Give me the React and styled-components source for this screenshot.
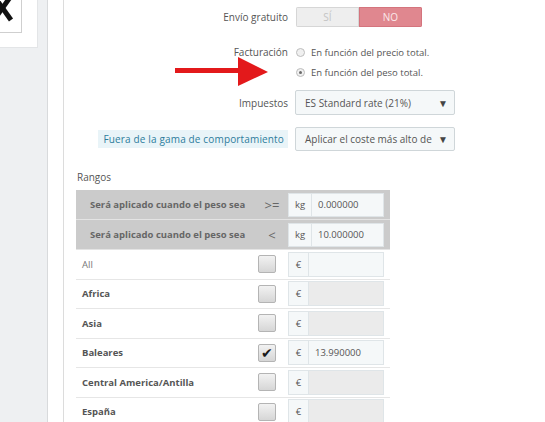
import React from 'react';
import styled, { createGlobalStyle } from 'styled-components';

const GlobalStyle = createGlobalStyle`
  html, body {
    margin: 0;
    padding: 0;
    background: #fff;
    font-family: "Open Sans", "Liberation Sans", sans-serif;
    color: #555;
  }
`;

const Page = styled.div`
  position: relative;
  display: flex;
  width: 545px;
  height: 422px;
  overflow: hidden;
`;

const Sidebar = styled.div`
  width: 47px;
  flex-shrink: 0;
  background: #eef0f2;
  border-right: 1px solid #d8dadc;
`;

const LogoCard = styled.div`
  width: 38px;
  height: 48px;
  background: #fff;
  border-right: 1px solid #e3e5e7;
  border-bottom: 1px solid #e3e5e7;
  box-sizing: border-box;
`;

const LogoBox = styled.div`
  width: 22px;
  height: 33px;
  border-right: 1px solid #cfcfcf;
  border-bottom: 1px solid #cfcfcf;
  box-sizing: border-box;
  overflow: hidden;
`;

const Gutter = styled.div`
  width: 15px;
  flex-shrink: 0;
  border-right: 1px solid #dcdcdc;
`;

const Panel = styled.div`
  flex: 1;
  padding: 7px 0 0 12px;
`;

const FormRow = styled.div`
  display: grid;
  grid-template-columns: 212px auto;
  column-gap: ${(p) => p.$gap || 8}px;
  align-items: ${(p) => p.$align || 'center'};
  margin-bottom: ${(p) => p.$mb || 0}px;
`;

const Label = styled.div`
  justify-self: end;
  font-size: 10px;
  color: #555;
  line-height: ${(p) => p.$lh || 14}px;
`;

const HintLabel = styled.div`
  justify-self: end;
  font-size: 10px;
  color: #2d7c9c;
  background: #e9f4f8;
  padding: 2px 4px 2px 5px;
  line-height: 14px;
  letter-spacing: 0.15px;
`;

const Toggle = styled.div`
  display: flex;
  width: 126px;
  height: 20px;
  border-radius: 2px;
  overflow: hidden;
`;

const ToggleHalf = styled.div`
  flex: 1;
  display: flex;
  align-items: center;
  justify-content: center;
  font-size: 10px;
  box-sizing: border-box;
  background: ${(p) => (p.$on ? '#e0878f' : '#eeeeee')};
  color: ${(p) => (p.$on ? '#fbe9ea' : '#c4c4c4')};
  border: 1px solid ${(p) => (p.$on ? '#d4747d' : '#d6d6d6')};
`;

const RadioList = styled.div`
  display: flex;
  flex-direction: column;
`;

const RadioLine = styled.div`
  display: flex;
  align-items: center;
  gap: 6px;
  height: 20px;
  font-size: 9.5px;
  color: #555;
`;

const RadioDot = styled.span`
  width: 7px;
  height: 7px;
  border-radius: 50%;
  border: 1px solid #bdbdbd;
  background: #f0f0f0;
  display: flex;
  align-items: center;
  justify-content: center;
  &::after {
    content: '';
    width: 3px;
    height: 3px;
    border-radius: 50%;
    background: ${(p) => (p.$checked ? '#6a6a6a' : 'transparent')};
  }
`;

const Select = styled.div`
  width: 160px;
  height: ${(p) => p.$h || 25}px;
  box-sizing: border-box;
  border: 1px solid #cfd6d9;
  background: #f5f8f9;
  border-radius: 2px;
  display: flex;
  align-items: center;
  justify-content: space-between;
  padding: 0 6px 0 9px;
  font-size: 10px;
  color: #555;
  white-space: nowrap;
  overflow: hidden;
`;

const Caret = styled.span`
  font-size: 10px;
  color: #444;
  margin-left: 6px;
`;

const SectionTitle = styled.div`
  font-size: 10px;
  color: #555;
  margin: 19px 0 6px 1px;
  line-height: 14px;
`;

const Table = styled.div`
  width: 314px;
`;

const HeadRow = styled.div`
  display: grid;
  grid-template-columns: 180px 32px auto;
  align-items: center;
  height: 29px;
  background: #cbcbcb;
  border-bottom: 1px solid #e4e4e4;
`;

const HeadText = styled.div`
  font-size: 9.5px;
  font-weight: bold;
  color: #666;
  padding-left: 14px;
`;

const Operator = styled.div`
  font-size: 13px;
  color: #666;
  text-align: center;
`;

const Row = styled.div`
  display: grid;
  grid-template-columns: 182px 30px auto;
  align-items: center;
  height: 28.5px;
  border-bottom: 1px solid #e6e6e6;
`;

const ZoneName = styled.div`
  font-size: 9.5px;
  padding-left: 6px;
  font-weight: ${(p) => (p.$bold ? 'bold' : 'normal')};
  color: ${(p) => (p.$bold ? '#555' : '#777')};
`;

const CheckBox = styled.div`
  width: 18px;
  height: 18px;
  box-sizing: border-box;
  border: 1px solid #b4b4b4;
  border-radius: 2px;
  background: linear-gradient(#f2f2f2, #d6d6d6);
  display: flex;
  align-items: center;
  justify-content: center;
  font-size: 14px;
  color: #1a1a1a;
  line-height: 1;
`;

const InputGroup = styled.div`
  display: flex;
  width: 96px;
  height: ${(p) => p.$h || 25}px;
  box-sizing: border-box;
  border: 1px solid #dfe5e8;
  background: #fff;
`;

const Addon = styled.div`
  width: ${(p) => p.$w || 19}px;
  flex-shrink: 0;
  display: flex;
  align-items: center;
  justify-content: center;
  font-size: 9.5px;
  color: #555;
  background: #f5f8f9;
  border-right: 1px solid #dfe5e8;
`;

const Field = styled.div`
  flex: 1;
  display: flex;
  align-items: center;
  padding-left: 6px;
  font-size: 9.5px;
  color: #555;
  background: ${(p) => (p.$disabled ? '#ebebeb' : '#f5f8f9')};
`;

const Arrow = styled.svg`
  position: absolute;
  left: 170px;
  top: 54px;
`;

const zones = [
  { name: 'All', bold: false, enabled: true },
  { name: 'Africa', bold: true },
  { name: 'Asia', bold: true },
  { name: 'Baleares', bold: true, checked: true, enabled: true, price: '13.990000' },
  { name: 'Central America/Antilla', bold: true },
  { name: 'España', bold: true },
];

const ranges = [
  { op: '>=', value: '0.000000' },
  { op: '<', value: '10.000000' },
];

const App = () => (
  <>
    <GlobalStyle />
    <Page>
      <Sidebar>
        <LogoCard>
          <LogoBox>
            <svg width="22" height="33" viewBox="0 0 22 33">
              <path d="M-6 -4 L11 20" stroke="#111" strokeWidth="5" />
              <path d="M11 -4 L-6 20" stroke="#111" strokeWidth="5" />
            </svg>
          </LogoBox>
        </LogoCard>
      </Sidebar>
      <Gutter />
      <Panel>
        <FormRow $mb={15}>
          <Label>Envío gratuito</Label>
          <Toggle>
            <ToggleHalf>SÍ</ToggleHalf>
            <ToggleHalf $on>NO</ToggleHalf>
          </Toggle>
        </FormRow>

        <FormRow $align="start" $mb={8}>
          <Label $lh={20}>Facturación</Label>
          <RadioList>
            <RadioLine>
              <RadioDot />
              En función del precio total.
            </RadioLine>
            <RadioLine>
              <RadioDot $checked />
              En función del peso total.
            </RadioLine>
          </RadioList>
        </FormRow>

        <FormRow $gap={7} $mb={12}>
          <Label>Impuestos</Label>
          <Select>
            ES Standard rate (21%)
            <Caret>▼</Caret>
          </Select>
        </FormRow>

        <FormRow $gap={7}>
          <HintLabel>Fuera de la gama de comportamiento</HintLabel>
          <Select $h={24}>
            Aplicar el coste más alto de
            <Caret>▼</Caret>
          </Select>
        </FormRow>

        <SectionTitle>Rangos</SectionTitle>

        <Table>
          {ranges.map((r) => (
            <HeadRow key={r.op}>
              <HeadText>Será aplicado cuando el peso sea</HeadText>
              <Operator>{r.op}</Operator>
              <InputGroup $h={24}>
                <Addon $w={22}>kg</Addon>
                <Field>{r.value}</Field>
              </InputGroup>
            </HeadRow>
          ))}
          {zones.map((z) => (
            <Row key={z.name}>
              <ZoneName $bold={z.bold}>{z.name}</ZoneName>
              <CheckBox>{z.checked ? '✔' : ''}</CheckBox>
              <InputGroup>
                <Addon>€</Addon>
                <Field $disabled={!z.enabled}>{z.price || ''}</Field>
              </InputGroup>
            </Row>
          ))}
        </Table>
      </Panel>

      <Arrow width="100" height="34" viewBox="170 54 100 34">
        <rect x="175" y="68" width="66" height="5" fill="#e3191b" />
        <polygon points="238,57 268,72 238,86" fill="#e3191b" />
      </Arrow>
    </Page>
  </>
);

export default App;
